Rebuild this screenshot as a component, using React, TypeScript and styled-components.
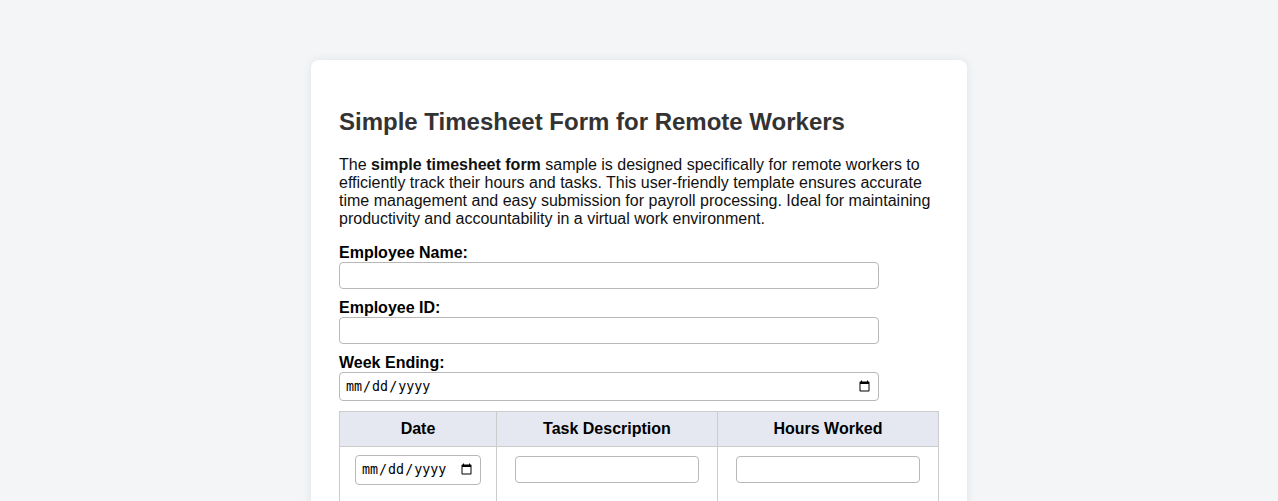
import styled, { createGlobalStyle } from "styled-components"

const GlobalStyle = createGlobalStyle`
  body {
    margin: 0;
    background: #f4f5f7;
    font-family: "Liberation Sans", Arial, sans-serif;
  }
`

export default function App() {
  return (
    <>
      <GlobalStyle />
      <Card>
        <Title>Simple Timesheet Form for Remote Workers</Title>
        <Intro>
          The <strong>simple timesheet form</strong> sample is designed specifically for remote workers to
          efficiently track their hours and tasks. This user-friendly template ensures accurate time
          management and easy submission for payroll processing. Ideal for maintaining productivity and
          accountability in a virtual work environment.
        </Intro>
        <form>
          <Label htmlFor="name">Employee Name:</Label>
          <Field id="name" type="text" />
          <Label htmlFor="empid">Employee ID:</Label>
          <Field id="empid" type="text" />
          <Label htmlFor="week">Week Ending:</Label>
          <Field id="week" type="date" />
          <Table>
            <thead>
              <tr>
                <Th $w="26.2%">Date</Th>
                <Th $w="36.9%">Task Description</Th>
                <Th $w="36.9%">Hours Worked</Th>
              </tr>
            </thead>
            <tbody>
              <tr>
                <Td><CellInput type="date" /></Td>
                <Td><CellInput type="text" /></Td>
                <Td><CellInput type="number" /></Td>
              </tr>
            </tbody>
          </Table>
        </form>
      </Card>
    </>
  )
}

const Card = styled.div`
  width: 600px;
  margin: 60px auto 0;
  padding: 28px;
  background: #fff;
  border-radius: 8px;
  box-shadow: 0 0 10px rgba(0, 0, 0, 0.08);
`

const Title = styled.h1`
  margin: 20px 0 20px;
  font-size: 24px;
  color: #333;
`

const Intro = styled.p`
  margin: 0 0 16px;
  font-size: 16px;
  color: #111;
`

const Label = styled.label`
  display: block;
  font-weight: bold;
  font-size: 16px;
  color: #000;
`

const Field = styled.input`
  display: block;
  box-sizing: border-box;
  width: 90%;
  margin: 0 0 10px;
  padding: 5px;
  border: 1px solid #b8b8b8;
  border-radius: 4px;
  font-size: 13.33px;
`

const Table = styled.table`
  width: 100%;
  margin-top: 10px;
  border-collapse: collapse;
`

const Th = styled.th<{ $w: string }>`
  width: ${(p) => p.$w};
  padding: 8px;
  border: 1px solid #ccc;
  background: #e5e8f0;
  font-size: 16px;
  color: #000;
`

const Td = styled.td`
  padding: 8px 8px 16px;
  border: 1px solid #ccc;
  text-align: center;
`

const CellInput = styled.input`
  box-sizing: border-box;
  width: 90%;
  padding: 5px;
  border: 1px solid #b8b8b8;
  border-radius: 4px;
  font-size: 13.33px;
`
